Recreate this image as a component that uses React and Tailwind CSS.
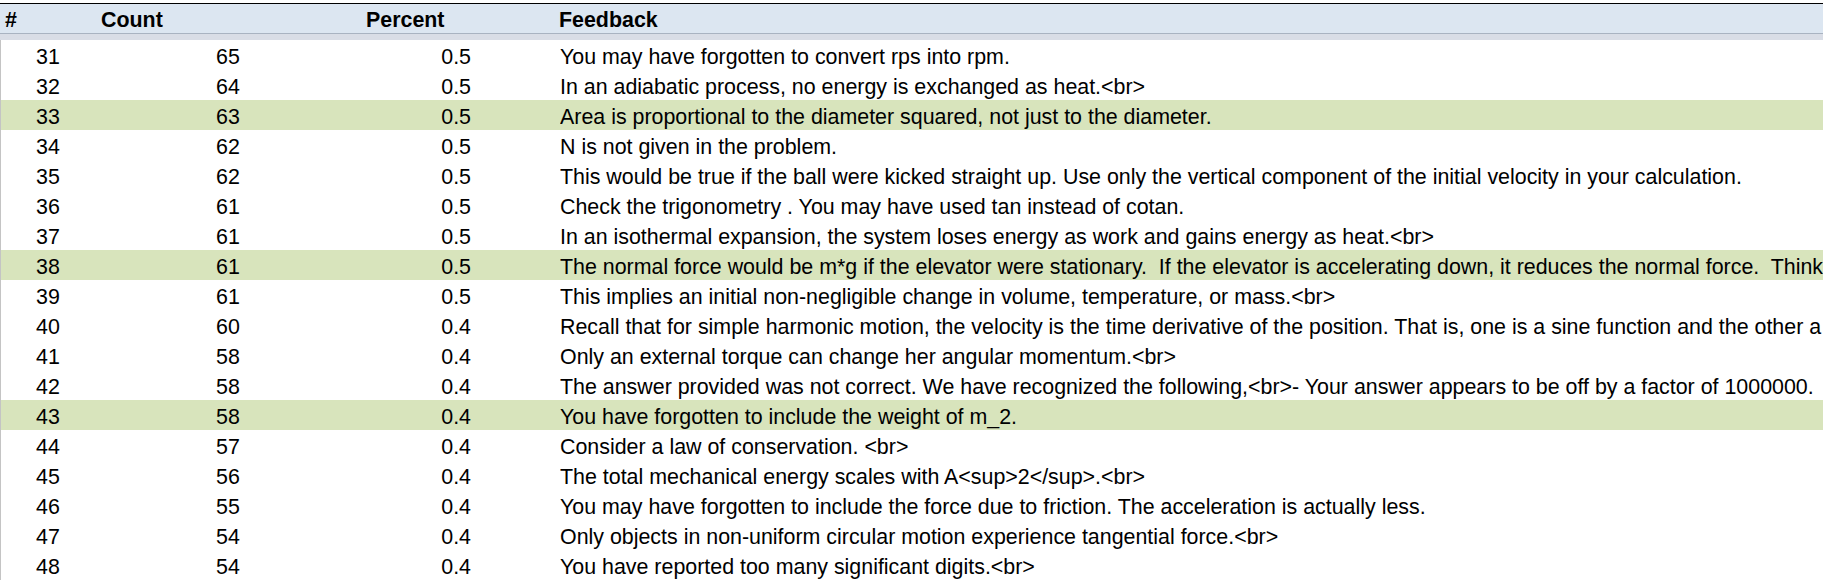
import React from 'react';

const rows = [
  [31, 65, '0.5', 'You may have forgotten to convert rps into rpm.'],
  [32, 64, '0.5', 'In an adiabatic process, no energy is exchanged as heat.<br>'],
  [33, 63, '0.5', 'Area is proportional to the diameter squared, not just to the diameter.', true],
  [34, 62, '0.5', 'N is not given in the problem.'],
  [35, 62, '0.5', 'This would be true if the ball were kicked straight up. Use only the vertical component of the initial velocity in your calculation.'],
  [36, 61, '0.5', 'Check the trigonometry . You may have used tan instead of cotan.'],
  [37, 61, '0.5', 'In an isothermal expansion, the system loses energy as work and gains energy as heat.<br>'],
  [38, 61, '0.5', 'The normal force would be m*g if the elevator were stationary.  If the elevator is accelerating down, it reduces the normal force.  Think about the direction of the acceleration.', true],
  [39, 61, '0.5', 'This implies an initial non-negligible change in volume, temperature, or mass.<br>'],
  [40, 60, '0.4', 'Recall that for simple harmonic motion, the velocity is the time derivative of the position. That is, one is a sine function and the other a cosine function.'],
  [41, 58, '0.4', 'Only an external torque can change her angular momentum.<br>'],
  [42, 58, '0.4', 'The answer provided was not correct. We have recognized the following,<br>- Your answer appears to be off by a factor of 1000000.'],
  [43, 58, '0.4', 'You have forgotten to include the weight of m_2.', true],
  [44, 57, '0.4', 'Consider a law of conservation. <br>'],
  [45, 56, '0.4', 'The total mechanical energy scales with A<sup>2</sup>.<br>'],
  [46, 55, '0.4', 'You may have forgotten to include the force due to friction. The acceleration is actually less.'],
  [47, 54, '0.4', 'Only objects in non-uniform circular motion experience tangential force.<br>'],
  [48, 54, '0.4', 'You have reported too many significant digits.<br>'],
];

const cols = 'grid grid-cols-[100px_265px_194px_1fr]';

export default function App() {
  return (
    <div className="w-[1823px] h-[580px] overflow-hidden bg-white text-black font-['Liberation_Sans',Arial,sans-serif]">
      <div className="h-[3px] bg-white" />
      <div className="h-px bg-black" />
      {/* Header */}
      <div className={`${cols} h-[30px] pt-[4px] leading-[25px] bg-[#dce6f1] text-[21.4px] font-bold border-b border-[#a9b3c1]`}>
        <div className="pl-[5px]">#</div>
        <div className="pl-px">Count</div>
        <div className="pl-px">Percent</div>
        <div>Feedback</div>
      </div>
      <div className="h-[6px] bg-[#d9dde6]" />
      {/* Rows */}
      <div className="border-l border-[#c4c4c4]">
        {rows.map(([n, count, pct, text, hl]) => (
          <div
            key={n}
            className={`${cols} h-[30px] pt-[4px] leading-[26px] text-[21.4px] whitespace-pre overflow-hidden ${hl ? 'bg-[#d8e4bc]' : 'bg-white'}`}
          >
            <div className="pl-[35px]">{n}</div>
            <div className="pl-[115px]">{count}</div>
            <div className="text-right pr-[89px]">{pct}</div>
            <div className="overflow-hidden">{text}</div>
          </div>
        ))}
      </div>
    </div>
  );
}
